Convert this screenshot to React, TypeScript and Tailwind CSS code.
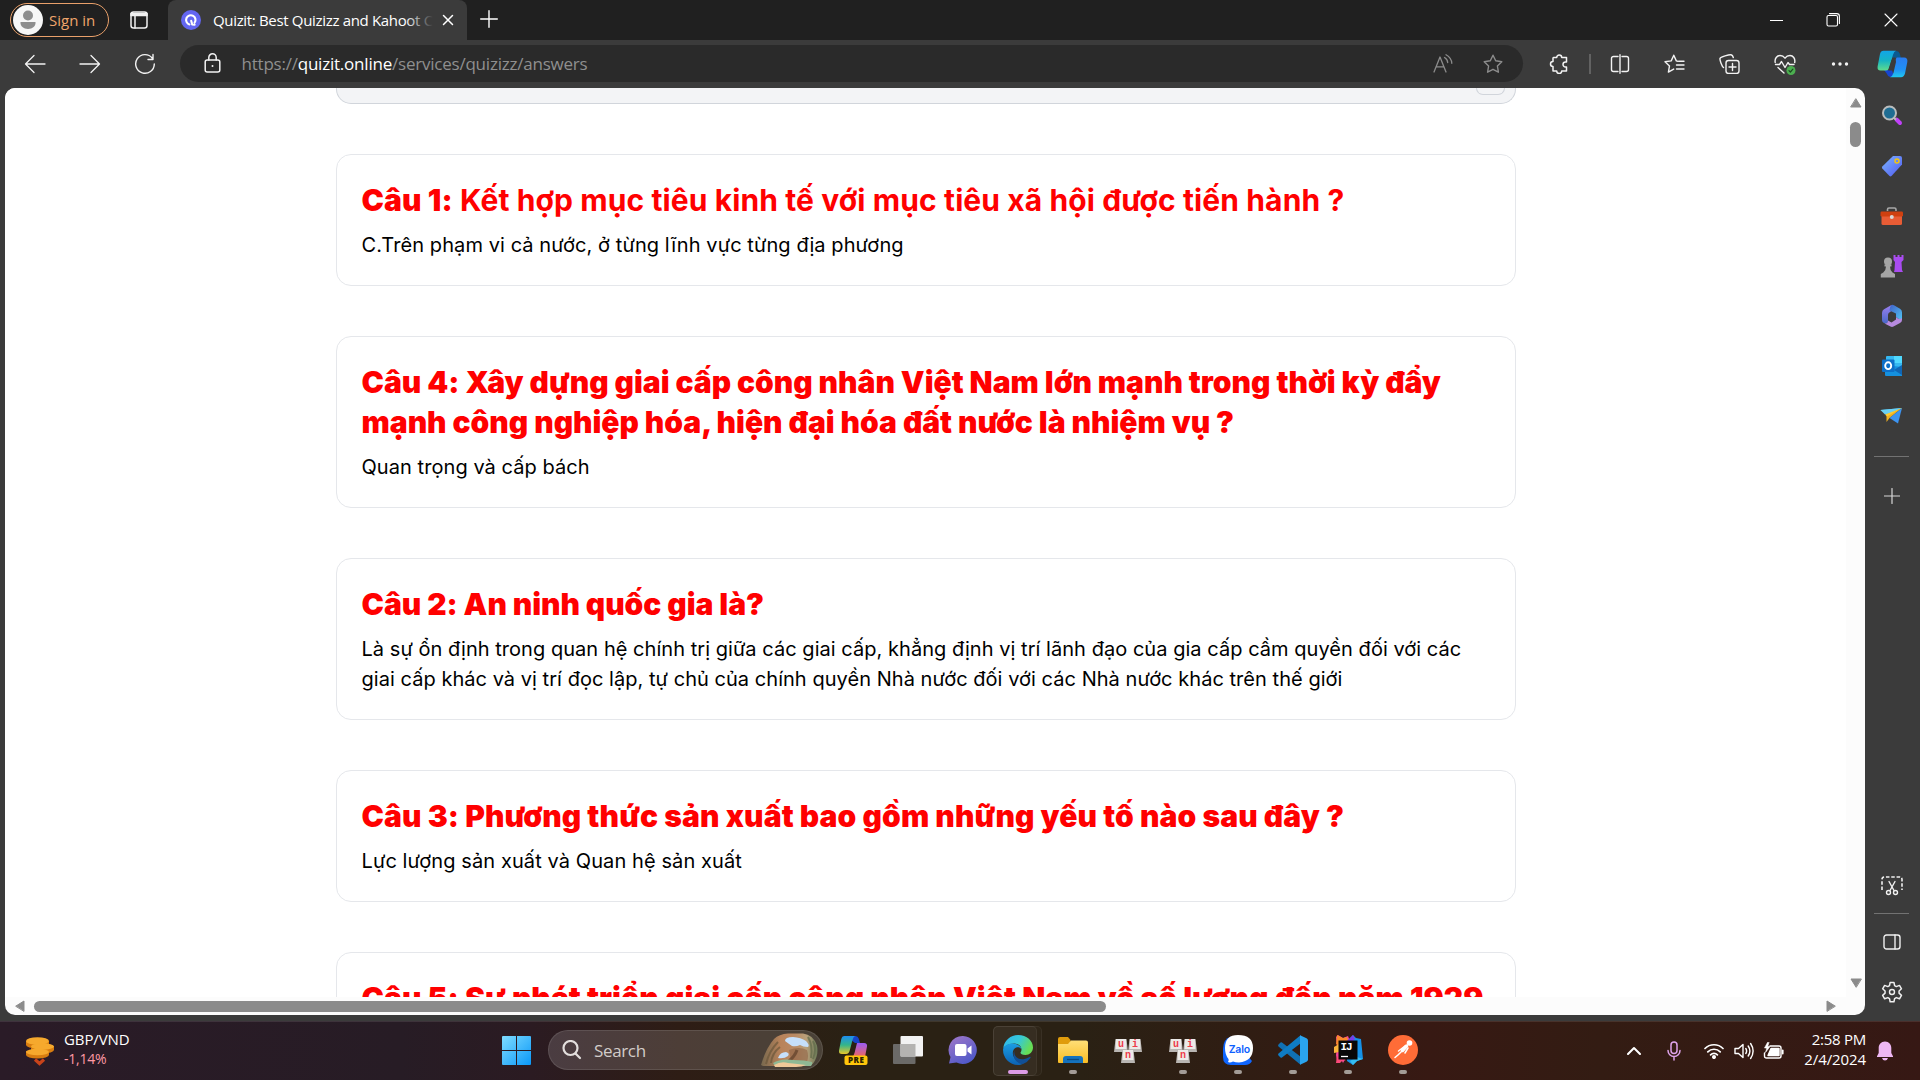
import React from "react";

const ui = "font-['Open_Sans','Noto_Sans',sans-serif]";

type IconProps = { w?: number; h?: number; box?: string; sw?: number; className?: string; children: React.ReactNode };

function Icon({ w = 20, h = 20, box, sw = 1.4, className = "", children }: IconProps) {
  return (
    <svg
      width={w}
      height={h}
      viewBox={box ?? `0 0 ${w} ${h}`}
      fill="none"
      stroke="currentColor"
      strokeWidth={sw}
      strokeLinecap="round"
      strokeLinejoin="round"
      className={`shrink-0 ${className}`}
    >
      {children}
    </svg>
  );
}

const STAR = "M10 1.2l2.7 5.6 6.1.9-4.4 4.3 1 6.2-5.4-2.9-5.4 2.9 1-6.2L1.2 7.7l6.1-.9z";

function TabStrip() {
  return (
    <div className="flex h-10 bg-[#202020]">
      <div className="flex w-[168px] items-center pl-[10px]">
        <div className="flex h-[34px] w-[99px] items-center rounded-full border-[1.5px] border-[#e9a06a] pl-[2px]">
          <Icon w={30} h={30} sw={0}>
            <circle cx="15" cy="15" r="15" fill="#f7f7f7" />
            <circle cx="15" cy="10.5" r="5" fill="#8e8e8e" />
            <path d="M7.5 17h15c.5 4-3 7-7.5 7s-8-3-7.5-7z" fill="#8e8e8e" />
          </Icon>
          <span className="ml-[6px] -mt-px whitespace-nowrap text-[15px] leading-5 text-[#f0a56c]">Sign in</span>
        </div>
        <Icon w={18} h={18} sw={1.5} className="ml-[21px] text-[#f0f0f0]">
          <rect x="1" y="1" width="16" height="16" rx="2.5" />
          <path d="M1 2.5h16v2H1z" fill="currentColor" />
          <path d="M5 5v12" />
        </Icon>
      </div>
      <div className="flex w-[299px] items-center rounded-t-[8px] bg-[#3b3b3b] pl-[13px] text-white">
        <Icon w={20} h={20} sw={0}>
          <circle cx="10" cy="10" r="10" fill="#6366f1" />
          <path d="M8.4 14.4a4.700 4.700 0 1 1 5.200-1.700M10.200 10.800l1 3.700 2.400.2" fill="none" stroke="#fff" strokeWidth="2.1" />
        </Icon>
        <div className="relative -mt-px ml-3 w-[220px] overflow-hidden whitespace-nowrap text-[15px] leading-5 tracking-[-0.33px]">
          Quizit: Best Quizizz and Kahoot C
          <div className="absolute inset-y-0 right-0 w-7 bg-gradient-to-r from-transparent to-[#3b3b3b]" />
        </div>
        <Icon w={12} h={12} sw={1.5} className="ml-[9px]">
          <path d="M1.500 1.500l9 9M10.500 1.500l-9 9" />
        </Icon>
      </div>
      <Icon w={18} h={18} sw={1.4} className="ml-[13px] mt-[10px] text-white">
        <path d="M9 .7v16.600M.7 9h16.600" />
      </Icon>
      <div className="ml-auto flex items-center text-white">
        <div className="flex w-[54px] justify-center"><Icon w={13} h={13} sw={1}><path d="M0 6.500h13" /></Icon></div>
        <div className="flex w-[59px] justify-center">
          <Icon w={14} h={14} sw={1.1}>
            <rect x="1" y="2.500" width="10.500" height="10.500" rx="1.500" />
            <path d="M3.500 .6h7.300q2.600 0 2.600 2.600v7.300" />
          </Icon>
        </div>
        <div className="flex w-[58px] justify-center"><Icon w={14} h={14} sw={1.1}><path d="M1 1l12 12M13 1L1 13" /></Icon></div>
      </div>
    </div>
  );
}

function Cell({ children }: { children: React.ReactNode }) {
  return <div className="flex w-[55px] shrink-0 items-center justify-center">{children}</div>;
}

function Toolbar() {
  return (
    <div className="flex h-12 bg-[#3b3b3b] text-[#f2f2f2]">
      <div className="flex w-[180px] items-center pb-px pl-[7px]">
        <Cell><Icon w={22} h={20} sw={1.3}><path d="M21 10H1.500M10 1.500L1.500 10l8.500 8.500" /></Icon></Cell>
        <Cell><Icon w={22} h={20} sw={1.3}><path d="M1 10h19.500M12 1.500l8.500 8.500-8.500 8.500" /></Icon></Cell>
        <Cell><Icon w={22} h={22} sw={1.4}><path d="M18.300 5.200A9.300 9.300 0 1 0 20.300 11M19 1.500v5h-5" /></Icon></Cell>
      </div>
      <div className="mt-[5px] flex h-[37px] w-[1343px] items-center rounded-full bg-[#2a2a2a] pl-6">
        <Icon w={17} h={21} sw={1.5}>
          <rect x="1.200" y="7" width="14.600" height="12" rx="2" />
          <path d="M4.800 7V4.500a3.700 3.700 0 0 1 7.400 0V7" />
          <circle cx="8.500" cy="13" r="1" fill="currentColor" stroke="none" />
        </Icon>
        <span className="ml-[20.500px] whitespace-nowrap text-[17px] leading-6 tracking-[-0.22px] text-[#8f8f8f]">
          https://<span className="text-white">quizit.online</span>/services/quizizz/answers
        </span>
        <div className="ml-auto mr-[5px] flex text-[#8c8c8c]">
          <div className="flex w-[50px] items-center justify-center">
            <Icon w={20} h={20} sw={1.3}>
              <path d="M1 18L7 3l6 15M3.200 12.800h7.700M11.500 3.500q3 1.800 3.200 5M13 .8q5.500 3 5.800 8.500" />
            </Icon>
          </div>
          <div className="flex w-[50px] items-center justify-center"><Icon sw={1.4}><path d={STAR} /></Icon></div>
        </div>
      </div>
      <div className="flex flex-1 items-center">
        <div className="ml-[10px] flex w-[52px] justify-center">
          <Icon sw={1.5}>
            <path d="M4.500 3.500h3.200a2.500 2.500 0 0 1 5 0H17.500v4.500h-1a2.300 2.300 0 1 0 0 5h1v4h-4.800a2.500 2.500 0 0 1-5 0H4V12.500a2.400 2.400 0 1 1 0-5V4z" />
          </Icon>
        </div>
        <div className="ml-[4px] h-5 w-[2px] bg-[#626262]" />
        <div className="ml-px flex items-center">
          <Cell><Icon><path d="M8 2.500H3.500a2 2 0 0 0-2 2v11a2 2 0 0 0 2 2H8M12 2.500h4.500a2 2 0 0 1 2 2v11a2 2 0 0 1-2 2H12M10 .7v18.600" /></Icon></Cell>
          <Cell>
            <Icon w={21} h={20}>
              <path d="M13.500 7.200l-1.200-.3L9.800 1.200 7.200 6.900 1 7.700l4.500 4.200-1.100 6.200 5.300-3M14.500 7.200H20M12.500 11H20M12.500 15H20" />
            </Icon>
          </Cell>
          <Cell>
            <Icon w={21} h={20}>
              <rect x="7" y="6.500" width="13" height="13" rx="2.500" />
              <path d="M13.500 9.500v7M10 13h7M4.500 13.500C3 12.500.6 6 1 4.500S10.500.4 12 .8s2 1.500 2.300 2.700" />
            </Icon>
          </Cell>
          <Cell>
            <Icon w={22} h={21}>
              <path d="M1.200 8.500C.5 4.500 3 1.500 6 1.500c2.300 0 3.800 1 5 2.700C12.200 2.500 13.700 1.500 16 1.500c3 0 5.500 3 4.700 7M1.500 10.500h4l2-3 3.500 6 3-5 1.500 2h4.500M4 13.500l6 5.500" />
              <circle cx="17" cy="16.500" r="4.500" fill="#4caf50" stroke="none" />
              <path d="M15 16.600l1.400 1.400 2.500-2.800" stroke="#1c4a20" strokeWidth="1.2" />
            </Icon>
          </Cell>
          <Cell>
            <Icon w={18} h={6} sw={0}>
              <g fill="currentColor"><circle cx="2.500" cy="3" r="1.700" /><circle cx="9" cy="3" r="1.700" /><circle cx="15.500" cy="3" r="1.700" /></g>
            </Icon>
          </Cell>
          <Copilot />
        </div>
      </div>
    </div>
  );
}

function Copilot() {
  return (
    <svg width="31" height="28" viewBox="0 0 31 28" className="ml-[10px] shrink-0">
      <defs>
        <linearGradient id="cpA" x1="0" y1="0" x2="0" y2="1"><stop offset="0" stopColor="#12a5e8" /><stop offset=".5" stopColor="#16b4c4" /><stop offset="1" stopColor="#5fdc8c" /></linearGradient>
        <linearGradient id="cpB" x1="0" y1="0" x2="0" y2="1"><stop offset="0" stopColor="#2a7cf0" /><stop offset=".6" stopColor="#2090f5" /><stop offset="1" stopColor="#20c8f0" /></linearGradient>
      </defs>
      <path d="M15 1h4.500q2.500 0 3.200 2.600L24 8h-8l-3-4z" fill="#0a5a90" />
      <path d="M7 20h8l2 7h-3q-3 0-4-3z" fill="#1746d0" />
      <path d="M6.500.8H19q-2 .7-3 4l-3.500 12.500Q11.700 20.500 9 20.500H3.500Q0 20.500.6 16.500L3 4Q3.800.8 6.500.8z" fill="url(#cpA)" />
      <path d="M18.500 7.500h8.500q4 0 3.300 4.500l-2.300 11.500Q27 27.200 24 27.200H13q2.500-.8 3.500-4.500L19 12z" fill="url(#cpB)" />
      <path d="M14.500 10l2-2.500H20q-1.500.6-2.200 3.500l-2.600 9.500H11z" fill="#3b3b3b" />
    </svg>
  );
}

type Question = { lead: string; rest: string; plain?: boolean; answer: string; titleTracking: string; answerTracking: string };

const questions: Question[] = [
  {
    lead: "Câu 1:",
    rest: " Kết hợp mục tiêu kinh tế với mục tiêu xã hội được tiến hành ?",
    plain: true,
    answer: "C.Trên phạm vi cả nước, ở từng lĩnh vực từng địa phương",
    titleTracking: "tracking-[0.11px]",
    answerTracking: "tracking-[0.08px]",
  },
  {
    lead: "Câu 4:",
    rest: " Xây dựng giai cấp công nhân Việt Nam lớn mạnh trong thời kỳ đẩy mạnh công nghiệp hóa, hiện đại hóa đất nước là nhiệm vụ ?",
    answer: "Quan trọng và cấp bách",
    titleTracking: "tracking-[-0.02px]",
    answerTracking: "tracking-[0.06px]",
  },
  {
    lead: "Câu 2:",
    rest: " An ninh quốc gia là?",
    answer:
      "Là sự ổn định trong quan hệ chính trị giữa các giai cấp, khẳng định vị trí lãnh đạo của gia cấp cầm quyền đối với các giai cấp khác và vị trí đọc lập, tự chủ của chính quyền Nhà nước đối với các Nhà nước khác trên thế giới",
    titleTracking: "tracking-[-0.04px]",
    answerTracking: "tracking-[0.04px]",
  },
  {
    lead: "Câu 3:",
    rest: " Phương thức sản xuất bao gồm những yếu tố nào sau đây ?",
    answer: "Lực lượng sản xuất và Quan hệ sản xuất",
    titleTracking: "tracking-[0.1px]",
    answerTracking: "tracking-[0.09px]",
  },
  {
    lead: "Câu 5:",
    rest: " Sự phát triển giai cấp công nhân Việt Nam về số lượng đến năm 1929",
    answer: "",
    titleTracking: "tracking-[0.07px]",
    answerTracking: "tracking-normal",
  },
];

function Page() {
  return (
    <div className="ml-[5px] flex h-[927px] w-[1860px] flex-col overflow-hidden rounded-[10px] bg-[#fcfcfc]">
      <div className="flex h-[909px]">
        <div className="h-[909px] w-[1841px] overflow-hidden bg-white pl-[331px] font-['Inter',sans-serif]">
          <div className="flex h-4 w-[1180px] justify-end rounded-b-[15px] border border-t-0 border-[#d1d5db] bg-[#f3f4f6] pr-[10px]">
            <div className="h-[7px] w-[29px] rounded-b-[7px] border border-t-0 border-[#d1d5db]" />
          </div>
          {questions.map((q) => (
            <div key={q.lead} className="mt-[50px] w-[1180px] rounded-[15px] border border-[#e5e7eb] py-[25px] pl-[24.5px] pr-5">
              <h3 className={`text-[30px] font-bold leading-10 text-[#f00] ${q.titleTracking}`}>
                {q.plain ? (
                  <>
                    <strong className="font-black">{q.lead}</strong>
                    {q.rest}
                  </>
                ) : (
                  <strong className="font-black">{q.lead + q.rest}</strong>
                )}
              </h3>
              <p className={`mt-[10px] text-[20px] leading-[30px] text-black ${q.answerTracking}`}>{q.answer}</p>
            </div>
          ))}
        </div>
        <div className="flex w-[19px] flex-col items-center pt-[10px] text-[#8b8b8b]">
          <Icon w={12} h={10} sw={1}><path d="M6 1L11 9H1z" fill="currentColor" /></Icon>
          <div className="mt-[14px] h-[25px] w-[11px] rounded-full bg-[#8b8b8b]" />
          <Icon w={12} h={10} sw={1} className="mb-[9px] mt-auto"><path d="M6 9L1 1h10z" fill="currentColor" /></Icon>
        </div>
      </div>
      <div className="flex h-[18px] items-center pl-[10px] text-[#8b8b8b]">
        <Icon w={10} h={12} sw={1}><path d="M1 6l8-5v10z" fill="currentColor" /></Icon>
        <div className="ml-[9px] h-[11px] w-[1072px] rounded-full bg-[#8b8b8b]" />
        <Icon w={10} h={12} sw={1} className="ml-auto mr-[29px]"><path d="M9 6L1 1v10z" fill="currentColor" /></Icon>
      </div>
    </div>
  );
}

function Slot({ children }: { children: React.ReactNode }) {
  return <div className="flex h-[50px] w-[55px] shrink-0 items-center justify-center">{children}</div>;
}

function Sidebar() {
  return (
    <div className="flex w-[55px] flex-col items-center bg-[#3b3b3b] pr-[2px] pt-[3px] text-[#f0f0f0]">
      <Slot>
        <svg width="22" height="22" viewBox="0 0 22 22">
          <path d="M15.500 14.500l3.500 3.500" stroke="#c040f8" strokeWidth="4" strokeLinecap="round" />
          <path d="M12 12l3 2.800" stroke="#b9bcbd" strokeWidth="2" />
          <circle cx="8.500" cy="8" r="6.500" fill="#1f6d93" stroke="#b9bcbd" strokeWidth="2" />
        </svg>
      </Slot>
      <Slot>
        <svg width="22" height="22" viewBox="0 0 22 22">
          <defs><linearGradient id="tag" x1="0" y1="0" x2="1" y2="1"><stop offset="0" stopColor="#7cb6ff" /><stop offset="1" stopColor="#5058f0" /></linearGradient></defs>
          <path d="M12 1h7q2 0 2 2v6.500L10.500 21q-1 .8-2 0L1.300 13.500q-.8-1 0-2z" fill="url(#tag)" />
          <circle cx="16" cy="6" r="2" fill="none" stroke="#f2c510" strokeWidth="1.500" />
        </svg>
      </Slot>
      <Slot>
        <svg width="24" height="20" viewBox="0 0 24 20">
          <path d="M7.500 5V3.500Q7.500 2 9 2h5.500Q16 2 16 3.500V5" fill="none" stroke="#a8a8a8" strokeWidth="1.600" />
          <rect x="1.500" y="8" width="20.500" height="11" rx="1.500" fill="#e85c35" />
          <rect x=".5" y="5.500" width="22.500" height="5" rx="1.200" fill="#cf4010" />
          <circle cx="11.800" cy="11" r="2" fill="#d8d8d8" />
        </svg>
      </Slot>
      <Slot>
        <svg width="24" height="24" viewBox="0 0 24 24">
          <path d="M13.500 1h2v2h2V1h2v2h2V1h2v5l-2 2 .5 8 1 2h-9l.5-2 .5-8-1.500-2z" fill="#a94cf0" />
          <g fill="#a5a5a5"><circle cx="8" cy="7.500" r="4" /><path d="M4.500 10.500h7v2H10q0 4 2.500 6l2.500 1.500v3.500H.8V20l2.500-1.500Q6 16 6 12.500H4.500z" /></g>
        </svg>
      </Slot>
      <Slot>
        <svg width="22" height="24" viewBox="0 0 22 24">
          <defs>
            <linearGradient id="m3" x1="0" y1="0" x2="0" y2="1"><stop offset="0" stopColor="#9b7ff0" /><stop offset="1" stopColor="#4868c8" /></linearGradient>
            <linearGradient id="m4" x1="0" y1="0" x2="1" y2="1"><stop offset="0" stopColor="#4060c8" /><stop offset="1" stopColor="#50c4f4" /></linearGradient>
          </defs>
          <path d="M10.500 1L3 5.200Q1 6.500 1 9v7q0 2.500 3.500 3.500 2.500 0 2.500-2.500v-6q0-2 2-3l3-2z" fill="url(#m3)" />
          <path d="M10.500 1q1-.4 2.500.2l6 3.500q2 1.200 2 3.500v7q-.5 1-2 .5L15 13V9.500L8.500 6.500q.5-4.500 2-5.500z" fill="url(#m4)" />
          <path d="M21 14v2q0 2-2 3l-6.500 3.600q-1.500.8-3 0L3.500 19.500q3.500.3 3.500-3l3.500 2L15 15.500V13q3.500 3.500 6 1z" fill="#b68adf" />
        </svg>
      </Slot>
      <Slot>
        <svg width="22" height="22" viewBox="0 0 22 22">
          <rect x="5" y="1" width="16" height="15" rx="1" fill="#35b8f1" /><path d="M13 1h8v7h-8z" fill="#50d9ff" />
          <path d="M4 10l17 2v9H5q-1 0-1-1z" fill="#1490df" /><path d="M21 10v10l-8-5z" fill="#1066b5" />
          <rect x="1" y="4.500" width="12.500" height="12.500" rx="1" fill="#0d6fc8" />
          <ellipse cx="7.200" cy="10.700" rx="3" ry="3.400" fill="none" stroke="#fff" strokeWidth="1.900" />
        </svg>
      </Slot>
      <Slot>
        <svg width="23" height="18" viewBox="0 0 23 18">
          <path d="M.5 3L22 1 8 8z" fill="#42c1f5" /><path d="M22 1L6.500 8.500V15l3-4z" fill="#f0b020" /><path d="M22 1L18 16.500 9.500 11z" fill="#3c94f2" /><path d="M.5 3L22 1 5 7.500z" fill="#6ad0f5" /><path d="M5 7.500L22 1 7 9.500z" fill="#ffca30" />
        </svg>
      </Slot>
      <div className="mt-[15px] h-px w-[35px] bg-[#727272]" />
      <Icon w={16} h={16} sw={1.2} className="mt-[31px] text-[#d8d8d8]"><path d="M8 .5v15M.5 8h15" /></Icon>
      <Icon w={22} h={20} className="mt-auto">
        <path d="M1 14V3.500Q1 1 3.500 1h15Q21 1 21 3.500V14" strokeDasharray="3.500 1.800" strokeWidth="1.600" strokeLinecap="butt" />
        <path d="M8 5.500l5 9M14 5.500l-5 9" />
        <circle cx="7.500" cy="16.500" r="2" /><circle cx="14.500" cy="16.500" r="2" />
      </Icon>
      <div className="mt-[17px] h-px w-[35px] bg-[#727272]" />
      <Icon w={18} h={16} className="mt-[20px]"><rect x="1" y="1" width="16" height="14" rx="2.500" /><path d="M12 1v14" /></Icon>
      <Icon w={22} h={22} className="mb-[18px] mt-[31px]">
        <path d="M9.200 1h3.600l.6 3 1.600.9 3-1.100 1.900 3.200-2.300 2.100v2l2.300 2.100-1.900 3.200-3-1.100-1.600.9-.6 3H9.200l-.6-3-1.600-.9-3 1.100-1.900-3.200 2.300-2.100v-2L2.100 7 4 3.800l3 1.100L8.600 4z" transform="translate(-.6 .4) scale(1.06)" />
        <circle cx="11" cy="11" r="2.500" />
      </Icon>
    </div>
  );
}

function TaskApp({ children, mark }: { children: React.ReactNode; mark?: "idle" | "active" }) {
  return (
    <div className="relative flex h-[59px] w-[55px] shrink-0 items-center justify-center">
      {mark === "active" && (
        <>
          <div className="absolute left-[3px] top-1 h-[50px] w-[49px] rounded-[5px] border border-white/5 bg-white/[0.02]" />
          <div className="absolute left-[3px] top-1 h-[50px] w-[44px] rounded-[5px] border border-white/5 bg-white/[0.04]" />
        </>
      )}
      <div className="relative -top-px">{children}</div>
      {mark === "idle" && <div className="absolute bottom-[7px] left-[24px] h-1 w-2 rounded-full bg-[#a39c97]" />}
      {mark === "active" && <div className="absolute bottom-[7px] left-[18px] h-1 w-5 rounded-full bg-[#dd9be6]" />}
    </div>
  );
}

function Unikey() {
  const keys = [
    { x: 1, y: 4, t: "u" },
    { x: 15, y: 4, t: "i" },
    { x: 8, y: 15, t: "n" },
  ];
  return (
    <svg width="30" height="30" viewBox="0 0 30 30">
      {keys.map((k) => (
        <g key={k.t}>
          <path d={`M${k.x + 1.5} ${k.y}h11l1.500 13h-14z`} fill="#b9b6b3" />
          <path d={`M${k.x + 2} ${k.y}h10l.5 10h-11z`} fill="#eceae8" />
          <text x={k.x + 7} y={k.y + 7.5} textAnchor="middle" fontSize="10" fontWeight="800" fontFamily="Liberation Mono, monospace" fill="#ee3b4b">{k.t}</text>
        </g>
      ))}
    </svg>
  );
}

function Taskbar() {
  return (
    <div className="flex h-[59px] items-center border-t border-white/10 bg-[linear-gradient(90deg,#2a1b27_0px,#271c25_400px,#2b1b22_530px,#2e1d15_680px,#2a2114_850px,#2a2114_1080px,#301d13_1250px,#371913_1430px,#331c13_1600px,#361814_1920px)] text-white">
      <div className="flex w-[502px] items-center pl-[25px]">
        <svg width="30" height="32" viewBox="0 0 30 32" className="-mt-px">
          <g fill="#d87d10"><path d="M1 6h23v4a11.500 3.500 0 0 1-23 0zM6 11h23v4a11.500 3.500 0 0 1-23 0zM1 16h23v4a11.500 3.500 0 0 1-23 0z" /></g>
          <g fill="#f6a92d"><ellipse cx="12.500" cy="17" rx="11.500" ry="3.300" /><ellipse cx="17.500" cy="11.500" rx="11.500" ry="3.300" /><ellipse cx="12.500" cy="6" rx="11.500" ry="3.800" /></g>
          <path d="M10 24.500l4.500 4 4.500-4" fill="none" stroke="#c8431a" strokeWidth="3.200" />
        </svg>
        <div className="-mt-[5px] ml-[9px] text-[15px] leading-5">
          <div className="tracking-[-0.1px]">GBP/VND</div>
          <div className="text-[14px] tracking-[-0.25px] text-[#ff99a4]">-1,14%</div>
        </div>
      </div>
      <svg width="29" height="29" viewBox="0 0 29 29" className="-mt-px">
        <defs><linearGradient id="win" x1="0" y1="0" x2="1" y2="1"><stop offset="0" stopColor="#7fdcff" /><stop offset="1" stopColor="#0a98f8" /></linearGradient></defs>
        <path d="M0 1q0-1 1-1h13v14H0zM15 0h13q1 0 1 1v13H15zM0 15h14v14H1q-1 0-1-1zM15 15h14v13q0 1-1 1H15z" fill="url(#win)" />
      </svg>
      <div className="-mt-[2px] ml-[17px] flex h-10 w-[275px] items-center rounded-full border border-white/10 bg-white/15 pl-[13px]">
        <Icon w={20} h={20} sw={2.2} className="text-[#e3dfdd]"><circle cx="8.500" cy="8" r="7" /><path d="M13.500 13.500l4.500 4.500" /></Icon>
        <span className="ml-[12px] mt-px text-[17px] tracking-[-0.35px] text-[#d2ccc9]">Search</span>
        <svg width="58" height="34" viewBox="0 0 58 34" className="ml-auto mr-[3px]">
          <defs><linearGradient id="rock" x1="0" y1="0" x2="1" y2="0"><stop offset="0" stopColor="#77684e" /><stop offset=".35" stopColor="#b9835a" /><stop offset=".6" stopColor="#b98a64" /><stop offset=".8" stopColor="#b9a07a" /><stop offset="1" stopColor="#6c7a58" /></linearGradient></defs>
          <path d="M0 32Q5 15 13 6 18 1 27 .5h15q10 1 14 12 2 10-4 18-3 3-8 2.500H2z" fill="url(#rock)" />
          <path d="M5 31Q8 18 17 9M10 30q1-10 9-16" stroke="#6b573a" strokeWidth="2" fill="none" opacity=".7" />
          <path d="M47 4q5 8 3 21M52 8q4 8 0 18" stroke="#5f6a48" strokeWidth="2" fill="none" opacity=".7" />
          <path d="M28 17q10-4 18 0 2 6 0 12H30q-1-7-2-12z" fill="#8d6344" opacity=".6" />
          <path d="M36 17q-2 6-8 11" stroke="#5f4029" strokeWidth="3" fill="none" opacity=".7" />
          <path d="M24 8q0-4 8-4 8 .5 13 4 4 4 2 6-5 0-8-2-4 2-8 1-3-2-7-5z" fill="#c6e0fb" />
          <path d="M17 25q2-6 8-6 4 1 2 4-4 3-10 2z" fill="#c6e0fb" />
          <path d="M12 30q8-5 20-3 12 0 19 2 1 2-1 4H14z" fill="#8fb894" /><path d="M13 32q7-4 14-2 10 1 18 2-4 2-10 2H14z" fill="#f0c898" />
        </svg>
      </div>
      <div className="ml-[2px] flex">
        <TaskApp>
          <svg width="30" height="30" viewBox="0 0 30 30">
            <defs><linearGradient id="pr1" x1="0" y1="0" x2="0" y2="1"><stop offset="0" stopColor="#1d8df0" /><stop offset=".5" stopColor="#33b58a" /><stop offset="1" stopColor="#e9c52b" /></linearGradient><linearGradient id="pr2" x1="0" y1="0" x2="0" y2="1"><stop offset="0" stopColor="#9a5cf5" /><stop offset="1" stopColor="#f0655c" /></linearGradient></defs>
            <path d="M13 1h4.500q2.500 0 3.200 2.500l1.300 4.500h-5L13 5z" fill="#1644c8" />
            <path d="M6 1h11q-1.500.5-2.500 4L12 14.500q-1 4.500-4 4.500H4Q.5 19 1 15.500L3.300 4Q4 1 6 1z" fill="url(#pr1)" />
            <path d="M19 8h7q3.500 0 3 3.500L27 22H14q1.500-.5 2.500-4z" fill="url(#pr2)" />
            <rect x="6.500" y="20.500" width="23" height="9.500" rx="2" fill="#ffc60b" />
            <text x="18.300" y="28.100" textAnchor="middle" fontSize="8" fontWeight="800" letterSpacing=".6" fontFamily="Open Sans, sans-serif" fill="#2b2100">PRE</text>
          </svg>
        </TaskApp>
        <TaskApp>
          <svg width="30" height="28" viewBox="0 0 30 28"><rect x="0" y="8" width="22.500" height="20" rx="1" fill="#6b6a68" /><rect x="7.500" y="0" width="22.500" height="20.500" rx="1" fill="#f2f2f2" /><path d="M7.500 8h15v12.500h-15z" fill="#b4b3b1" /></svg>
        </TaskApp>
        <TaskApp>
          <svg width="30" height="30" viewBox="0 0 30 30">
            <defs><linearGradient id="chat" x1="0" y1="0" x2=".6" y2="1"><stop offset="0" stopColor="#a278c8" /><stop offset="1" stopColor="#5059c9" /></linearGradient></defs>
            <path d="M15 1a14 14 0 1 1-6.500 26.500L1 28.500l1.500-6.500A14 14 0 0 1 15 1z" fill="url(#chat)" />
            <rect x="7" y="9" width="11.500" height="12" rx="2" fill="#fff" /><path d="M19.500 13.500l4-3v9l-4-3z" fill="#fff" />
          </svg>
        </TaskApp>
        <TaskApp mark="active">
          <svg width="30" height="30" viewBox="0 0 30 30">
            <defs>
              <linearGradient id="ed1" x1="0" y1="0" x2="1" y2=".4"><stop offset="0" stopColor="#2fb4ee" /><stop offset=".55" stopColor="#36c8d8" /><stop offset="1" stopColor="#66dd55" /></linearGradient>
              <linearGradient id="ed2" x1="0" y1="0" x2="0" y2="1"><stop offset="0" stopColor="#1b9de2" /><stop offset="1" stopColor="#0c62b4" /></linearGradient>
            </defs>
            <path d="M.2 13A15 15 0 0 1 15 0c9 0 15 6 15 12.500 0 4.500-3.500 7.500-7.500 7.500-3.500 0-5-1.200-5-2.200 0-.8 1-1.200 1-3.300C18.500 11 15 8.500 11 8.500 5.500 8.500 1.500 11.500.2 13z" fill="url(#ed1)" />
            <path d="M.1 14C1 10.500 5.500 8.300 10 8.500c4.500.2 8.500 3 8.500 6-1-2-3-2.500-4.500-2.200-4 1-5.500 5.500-3 10 2 3.500 6 6 9.500 6.500-2 1-4 1.200-5.500 1.200A15 15 0 0 1 .1 14z" fill="url(#ed2)" />
            <path d="M11.500 15.500c-1.500 6.500 5 10 10 8.500 2.500-.7 4.500-2 5.500-2.300.8 0 .8.600.4 1.300A15 15 0 0 1 20 29C14 29 8 22 11.500 15.500z" fill="#114f96" />
          </svg>
        </TaskApp>
        <TaskApp mark="idle">
          <svg width="30" height="27" viewBox="0 0 30 27">
            <defs><linearGradient id="fold" x1="0" y1="0" x2="0" y2="1"><stop offset="0" stopColor="#ffdf77" /><stop offset="1" stopColor="#f9bd25" /></linearGradient></defs>
            <path d="M0 2q0-2 2-2h8l2.500 3v4H0z" fill="#e09c0c" /><path d="M0 7h10l3-3.500h15q2 0 2 2V25q0 1-1 1H1q-1 0-1-1z" fill="url(#fold)" />
            <path d="M5 26v-4q0-3 3-3h14q3 0 3 3v4z" fill="#1572bd" /><path d="M9 22.500h12" stroke="#0b4a82" strokeWidth="1.300" />
          </svg>
        </TaskApp>
        <TaskApp><Unikey /></TaskApp>
        <TaskApp mark="idle"><Unikey /></TaskApp>
        <TaskApp mark="idle">
          <svg width="30" height="30" viewBox="0 0 30 30">
            <path d="M8 1.500Q0 4 0 14v8q0 8 8 8h14q5 0 7-4z" fill="#0f66ff" /><path d="M15 0q15 0 15 13T16 27.500q-3.500 0-6-1-3 1.500-5 .5 1-1.500.5-3Q2 20 2 13 2 0 15 0z" fill="#fff" />
            <text x="16.300" y="17.500" textAnchor="middle" fontSize="10.500" fontWeight="600" letterSpacing="-.2" fontFamily="Inter, sans-serif" fill="#0b60ff">Zalo</text>
          </svg>
        </TaskApp>
        <TaskApp mark="idle">
          <svg width="30" height="30" viewBox="0 0 30 30">
            <path d="M.5 9.500l2-2q.8-.5 1.500 0L23 22v7.500q-1 0-2-1L.5 11.500q-.8-1 0-2z" fill="#1070b3" /><path d="M.5 20.500l2 2q.8.500 1.500 0L23 8V.5q-1 0-2 1L.5 18.500q-.8 1 0 2z" fill="#0f7cc4" />
            <path d="M22 .3l6.500 3q1.500.8 1.500 2.200v19q0 1.400-1.500 2.200l-6.500 3Z" fill="#2aa4ee" />
          </svg>
        </TaskApp>
        <TaskApp mark="idle">
          <svg width="30" height="30" viewBox="0 0 30 30">
            <path d="M3 2l2-2 5 3 5-2 3 8-4 12-4 7-2-4-4 2-1-6 1-8z" fill="#f6459a" /><path d="M4 0l6 3 4-1 2 6-8 4-5-3z" fill="#fb8a2b" /><path d="M1 12l5-3v8l-5 1z" fill="#f9b33a" /><path d="M15 5l5-5 3 3 5 1 2 20-6 2-4 4-6-4z" fill="#1592e8" /><path d="M14 6l6-6 2 4-5 5z" fill="#7a3be8" /><path d="M24 22l6 2-6 2-4 4-3-4z" fill="#35bdf2" /><path d="M3 28l1-7 9 4-4 1-2 2z" fill="#fb4a7a" />
            <rect x="5.500" y="5.500" width="19" height="19" fill="#080808" />
            <text x="7.500" y="15" fontSize="11" fontWeight="700" fontFamily="Liberation Mono, monospace" letterSpacing="-1" fill="#fff">IJ</text>
            <path d="M8 21.500h7" stroke="#fff" strokeWidth="1.300" />
          </svg>
        </TaskApp>
        <TaskApp mark="idle">
          <svg width="30" height="30" viewBox="0 0 30 30">
            <circle cx="15" cy="15" r="15" fill="#ff6c37" /><circle cx="21.500" cy="8" r="2.800" fill="#fff" /><path d="M18.500 11L14.500 15.500" stroke="#fff" strokeWidth="3.500" strokeLinecap="round" /><path d="M17 11l-6.500 5M20 13l-3 5M14 16l-3.500 3.500-3.500 3" stroke="#fff" strokeWidth="1.500" strokeLinecap="round" fill="none" />
          </svg>
        </TaskApp>
      </div>
      <div className="-mt-px ml-auto flex items-center">
        <Icon w={14} h={9} sw={2}><path d="M1 8l6-6 6 6" /></Icon>
        <Icon w={14} h={20} sw={1.5} className="ml-[26px] text-[#dfa3ea]"><rect x="4" y="1" width="6" height="11.500" rx="3" /><path d="M1 9.500a6 6 0 0 0 12 0M7 15.500V19" /></Icon>
        <Icon w={20} h={16} sw={1.7} className="ml-[23px]"><path d="M1 5.500a12.700 12.700 0 0 1 18 0M3.800 8.800a8.800 8.800 0 0 1 12.400 0M6.600 11.800a4.800 4.800 0 0 1 6.800 0" /><circle cx="10" cy="14" r="1.200" fill="currentColor" /></Icon>
        <Icon w={20} h={18} sw={1.4} className="ml-[10px]"><path d="M1 6.500h3.500L9 2.500v13l-4.500-4H1zM11.800 6.500q1.600 2.500 0 5M14.200 4q3.400 5 0 10M16.600 1.500q5 7.500 0 15" /></Icon>
        <Icon w={21} h={18} sw={1.4} className="ml-[9px]"><path d="M7 4h9q2 0 2 2v8q0 2-2 2H3.500q-2 0-2-2v-3" /><path d="M8 6.500h8v7H5z" fill="currentColor" /><path d="M19.700 8.500v3" strokeWidth="1.800" /><path d="M4.500 .5L1.500 6h2.300L2.500 10.500 7 4.500H4.700L6 .5z" fill="currentColor" strokeWidth=".6" /></Icon>
        <div className="-mt-[3px] ml-[18px] flex w-[64px] flex-col items-end whitespace-nowrap text-[15px] leading-5">
          <div className="tracking-[-0.25px]">2:58 PM</div>
          <div className="tracking-[-0.1px]">2/4/2024</div>
        </div>
        <Icon w={16} h={20} sw={0} className="ml-[11px] mr-[27px] text-[#efb8f4]"><path d="M8 .5c-4 0-6.300 3-6.300 6.500v5L0 15.200V16h16v-.8L14.300 12V7C14.300 3.500 12 .5 8 .5zM5 17h6q-.8 2.500-3 2.500T5 17z" fill="currentColor" /></Icon>
      </div>
    </div>
  );
}

export default function App() {
  return (
    <div className={`flex h-[1080px] w-[1920px] flex-col overflow-hidden bg-[#3b3b3b] ${ui}`}>
      <TabStrip />
      <Toolbar />
      <div className="flex h-[933px]">
        <Page />
        <Sidebar />
      </div>
      <Taskbar />
    </div>
  );
}
